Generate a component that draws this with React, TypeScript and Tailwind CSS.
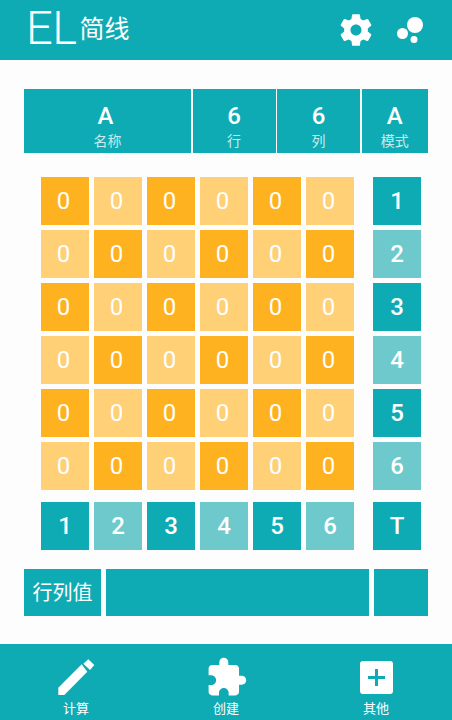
const font = { fontFamily: '"Roboto", "Noto Sans CJK SC", sans-serif' }

const rows = [0, 1, 2, 3, 4, 5]

function Cell({ label, dark, teal }: { label: string; dark: boolean; teal?: boolean }) {
  const bg = teal ? (dark ? 'bg-[#0fabb5]' : 'bg-[#6ec9cc]') : dark ? 'bg-[#ffb21f]' : 'bg-[#ffd076]'
  const text = teal ? 'font-medium' : 'pr-[3px] font-normal'
  return (
    <div className={`flex h-12 w-12 items-center justify-center text-[24px] text-white ${text} ${bg}`}>
      {label}
    </div>
  )
}

function HeadCell({ value, name, className, valueClass }: { value: string; name: string; className: string; valueClass?: string }) {
  return (
    <div className={`flex h-full flex-col items-center bg-[#0fabb5] pt-[13px] text-white ${className}`}>
      <span className={`text-[24px] leading-[28px] font-medium ${valueClass ?? ''}`}>{value}</span>
      <span className="mt-[1px] text-[14px] leading-[20px] text-[#c8ecee]">{name}</span>
    </div>
  )
}

function NavItem({ label, children }: { label: string; children: React.ReactNode }) {
  return (
    <div className="flex w-[100px] flex-col items-center">
      <div className="flex h-[43px] items-center justify-center">{children}</div>
      <span className="mt-[1px] text-[13px] leading-[18px] text-white">{label}</span>
    </div>
  )
}

export default function App() {
  return (
    <div className="flex h-[720px] w-[452px] flex-col bg-[#fdfdfd]" style={font}>
      <header className="flex h-[60px] items-center bg-[#0fabb5] pl-[26px] text-white">
        <span className="mt-[-5px] text-[47px] leading-[47px] font-light tracking-[-0.5px]">EL</span>
        <span className="mt-[-1px] ml-[3px] text-[25px] leading-none">简线</span>
        <svg className="ml-auto" width="38" height="38" viewBox="0 0 24 24" fill="white">
          <path d="M19.43 12.98c.04-.32.07-.64.07-.98s-.03-.66-.07-.98l2.11-1.65c.19-.15.24-.42.12-.64l-2-3.46c-.12-.22-.39-.3-.61-.22l-2.49 1c-.52-.4-1.08-.73-1.69-.98l-.38-2.65C14.46 2.18 14.25 2 14 2h-4c-.25 0-.46.18-.49.42l-.38 2.65c-.61.25-1.17.59-1.69.98l-2.49-1c-.23-.09-.49 0-.61.22l-2 3.46c-.13.22-.07.49.12.64l2.11 1.65c-.04.32-.07.65-.07.98s.03.66.07.98l-2.11 1.65c-.19.15-.24.42-.12.64l2 3.46c.12.22.39.3.61.22l2.49-1c.52.4 1.08.73 1.69.98l.38 2.65c.03.24.24.42.49.42h4c.25 0 .46-.18.49-.42l.38-2.65c.61-.25 1.17-.59 1.69-.98l2.49 1c.23.09.49 0 .61-.22l2-3.46c.12-.22.07-.49-.12-.64l-2.11-1.65zM12 15.5c-1.93 0-3.5-1.57-3.5-3.5s1.57-3.5 3.5-3.5 3.5 1.57 3.5 3.5-1.57 3.5-3.5 3.5z" />
        </svg>
        <svg className="mr-[28px] ml-[19px]" width="30" height="30" viewBox="0 0 30 30" fill="white">
          <circle cx="21" cy="10" r="8" />
          <circle cx="8.5" cy="18.5" r="5.5" />
          <circle cx="20" cy="24.5" r="3.5" />
        </svg>
      </header>

      <main className="flex-1 px-6 pt-[29px]">
        <div className="flex h-16 gap-[1.5px]">
          <HeadCell value="A" name="名称" className="w-[167px]" valueClass="mr-[4px]" />
          <HeadCell value="6" name="行" className="w-[83px]" />
          <HeadCell value="6" name="列" className="w-[83px]" />
          <HeadCell value="A" name="模式" className="w-[66.5px]" />
        </div>

        <div className="mt-6 flex flex-col gap-[5px] pl-[17px]">
          {rows.map((r) => (
            <div key={r} className="flex gap-[5px]">
              {rows.map((c) => (
                <Cell key={c} label="0" dark={(r + c) % 2 === 0} />
              ))}
              <div className="ml-[14px]">
                <Cell label={String(r + 1)} dark={r % 2 === 0} teal />
              </div>
            </div>
          ))}
          <div className="mt-[7px] flex gap-[5px]">
            {rows.map((c) => (
              <Cell key={c} label={String(c + 1)} dark={c % 2 === 0} teal />
            ))}
            <div className="ml-[14px]">
              <Cell label="T" dark teal />
            </div>
          </div>
        </div>

        <div className="mt-[19px] flex h-[47px] gap-[5px]">
          <div className="flex w-[77px] items-center justify-center bg-[#0fabb5] text-[20px] text-white">行列值</div>
          <div className="w-[263px] bg-[#0fabb5]" />
          <div className="w-[54px] bg-[#0fabb5]" />
        </div>
      </main>

      <footer className="flex h-[76px] justify-between bg-[#0fabb5] px-[26px] pt-[12px]">
        <NavItem label="计算">
          <svg width="37" height="37" viewBox="0 0 37 37" fill="white">
            <path d="M.3 28.7 23.7 5.3 29.3 12.7 6.3 36H.3Z" />
            <path d="M25.3 4.7 30.3.3 36.3 6 32 11Z" />
          </svg>
        </NavItem>
        <NavItem label="创建">
          <svg width="43" height="43" viewBox="0 0 24 24" fill="white">
            <path d="M20.5 11H19V7c0-1.1-.9-2-2-2h-4V3.5C13 2.12 11.88 1 10.5 1S8 2.12 8 3.5V5H4c-1.1 0-1.99.9-1.99 2v3.8H3.5c1.49 0 2.7 1.21 2.7 2.7s-1.21 2.7-2.7 2.7H2V20c0 1.1.9 2 2 2h3.8v-1.5c0-1.49 1.21-2.7 2.7-2.7 1.49 0 2.7 1.21 2.7 2.7V22H17c1.1 0 2-.9 2-2v-4h1.5c1.38 0 2.5-1.12 2.5-2.5S21.88 11 20.5 11z" />
          </svg>
        </NavItem>
        <NavItem label="其他">
          <svg width="33" height="33" viewBox="0 0 33 33">
            <rect width="33" height="33" rx="3" fill="white" />
            <path d="M15 8h3v7h7v3h-7v7h-3v-7H8v-3h7Z" fill="#0fabb5" />
          </svg>
        </NavItem>
      </footer>
    </div>
  )
}
